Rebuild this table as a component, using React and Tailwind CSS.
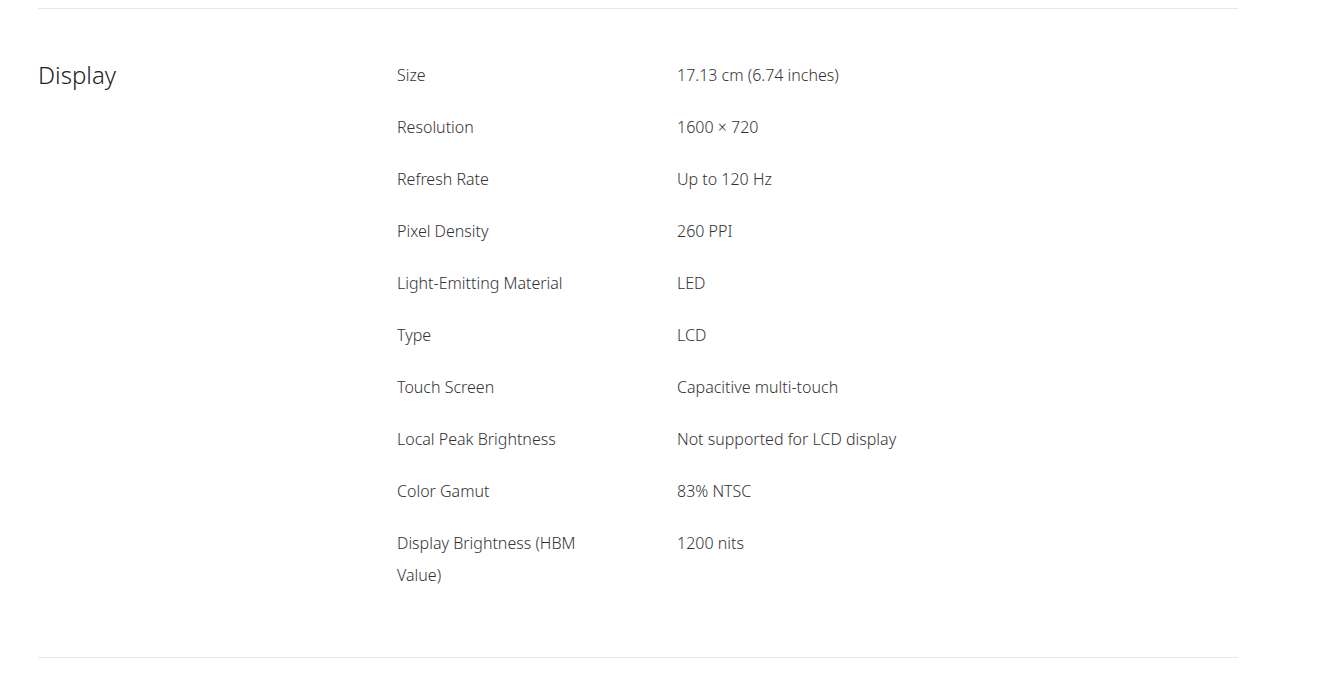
import React from "react";

const rows = [
  ["Size", "17.13 cm (6.74 inches)"],
  ["Resolution", "1600 × 720"],
  ["Refresh Rate", "Up to 120 Hz"],
  ["Pixel Density", "260 PPI"],
  ["Light-Emitting Material", "LED"],
  ["Type", "LCD"],
  ["Touch Screen", "Capacitive multi-touch"],
  ["Local Peak Brightness", "Not supported for LCD display"],
  ["Color Gamut", "83% NTSC"],
  ["Display Brightness (HBM Value)", "1200 nits"],
];

export default function App() {
  return (
    <div className="bg-white w-[1326px] h-[685px] pt-2 text-[#333]" style={{ fontFamily: '"Noto Sans", sans-serif' }}>
      <div className="ml-[38px] w-[1200px] border-t border-[#e8e8e8]">
        <div className="flex pt-[40px] pb-[56px]">
          <div className="w-[359px] text-[24px] leading-[52px] text-[#222] font-light">Display</div>
          <div className="flex flex-col">
            {rows.map(([k, v]) => (
              <div key={k} className="flex py-[10px] text-[16px] leading-[32px] font-light">
                <div className="w-[280px]">
                  <div className="w-[200px]">{k}</div>
                </div>
                <div>{v}</div>
              </div>
            ))}
          </div>
        </div>
        <div className="border-t border-[#e8e8e8]" />
      </div>
    </div>
  );
}
